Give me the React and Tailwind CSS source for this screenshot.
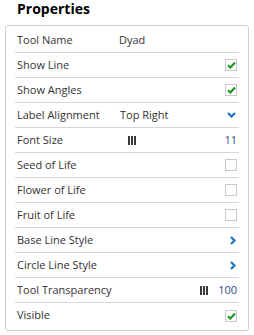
import React from 'react';

const rows = [
  { label: 'Tool Name', value: 'Dyad' },
  { label: 'Show Line', check: true },
  { label: 'Show Angles', check: true },
  { label: 'Label Alignment', value: 'Top Right', chevron: 'down' },
  { label: 'Font Size', slider: 'mid', num: '11' },
  { label: 'Seed of Life', check: false },
  { label: 'Flower of Life', check: false },
  { label: 'Fruit of Life', check: false },
  { label: 'Base Line Style', chevron: 'right' },
  { label: 'Circle Line Style', chevron: 'right' },
  { label: 'Tool Transparency', slider: 'right', num: '100' },
  { label: 'Visible', check: true, last: true },
];

const Checkbox = ({ on }) => (
  <div className="w-[12px] h-[12px] border border-[#c8c8c8] bg-white flex items-center justify-center">
    {on && (
      <svg width="9" height="8" viewBox="0 0 9 8">
        <path d="M1 4.2 L3.4 6.5 L8 1.5" fill="none" stroke="#1f9a1f" strokeWidth="2.2" />
      </svg>
    )}
  </div>
);

const Bars = () => (
  <div className="flex gap-[1px] h-[9px]">
    <div className="w-[2px] bg-[#3a3a3a]" />
    <div className="w-[2px] bg-[#3a3a3a]" />
    <div className="w-[2px] bg-[#3a3a3a]" />
  </div>
);

const Row = ({ r }) => (
  <div
    className={`h-[25px] flex items-center px-[2px] whitespace-nowrap ${r.last ? '' : 'border-b border-[#d6d6d6]'}`}
  >
    <span className="w-[102px] shrink-0">{r.label}</span>
    {r.value && <span className={r.chevron ? 'ml-[1px]' : ''}>{r.value}</span>}
    {r.slider === 'mid' && (
      <div className="ml-[9px]">
        <Bars />
      </div>
    )}
    <div className="flex-1" />
    {r.slider === 'right' && (
      <div className="mr-[10px]">
        <Bars />
      </div>
    )}
    {r.num && <span className="text-[#2b4a86]">{r.num}</span>}
    {r.check !== undefined && <Checkbox on={r.check} />}
    {r.chevron === 'down' && (
      <svg width="9" height="6" viewBox="0 0 9 6" className="mr-[1px]">
        <path d="M1 1 L4.5 4.5 L8 1" fill="none" stroke="#1b74c5" strokeWidth="2.2" />
      </svg>
    )}
    {r.chevron === 'right' && (
      <svg width="6" height="9" viewBox="0 0 6 9" className="mr-[1px]">
        <path d="M1 1 L4.5 4.5 L1 8" fill="none" stroke="#1b74c5" strokeWidth="2.2" />
      </svg>
    )}
  </div>
);

export default function App() {
  return (
    <div className="w-[254px] h-[335px] bg-white text-[#333] font-['Open_Sans',sans-serif] text-[11px] overflow-hidden">
      <h1 className="pl-[17px] h-[25px] text-[14px] font-bold text-black leading-[17px]">Properties</h1>
      <div className="ml-[5px] w-[244px] border border-[#cfcfcf] rounded-[3px] px-[9px] pt-[2px] pb-[2px]">
        {rows.map((r) => (
          <Row key={r.label} r={r} />
        ))}
      </div>
    </div>
  );
}
